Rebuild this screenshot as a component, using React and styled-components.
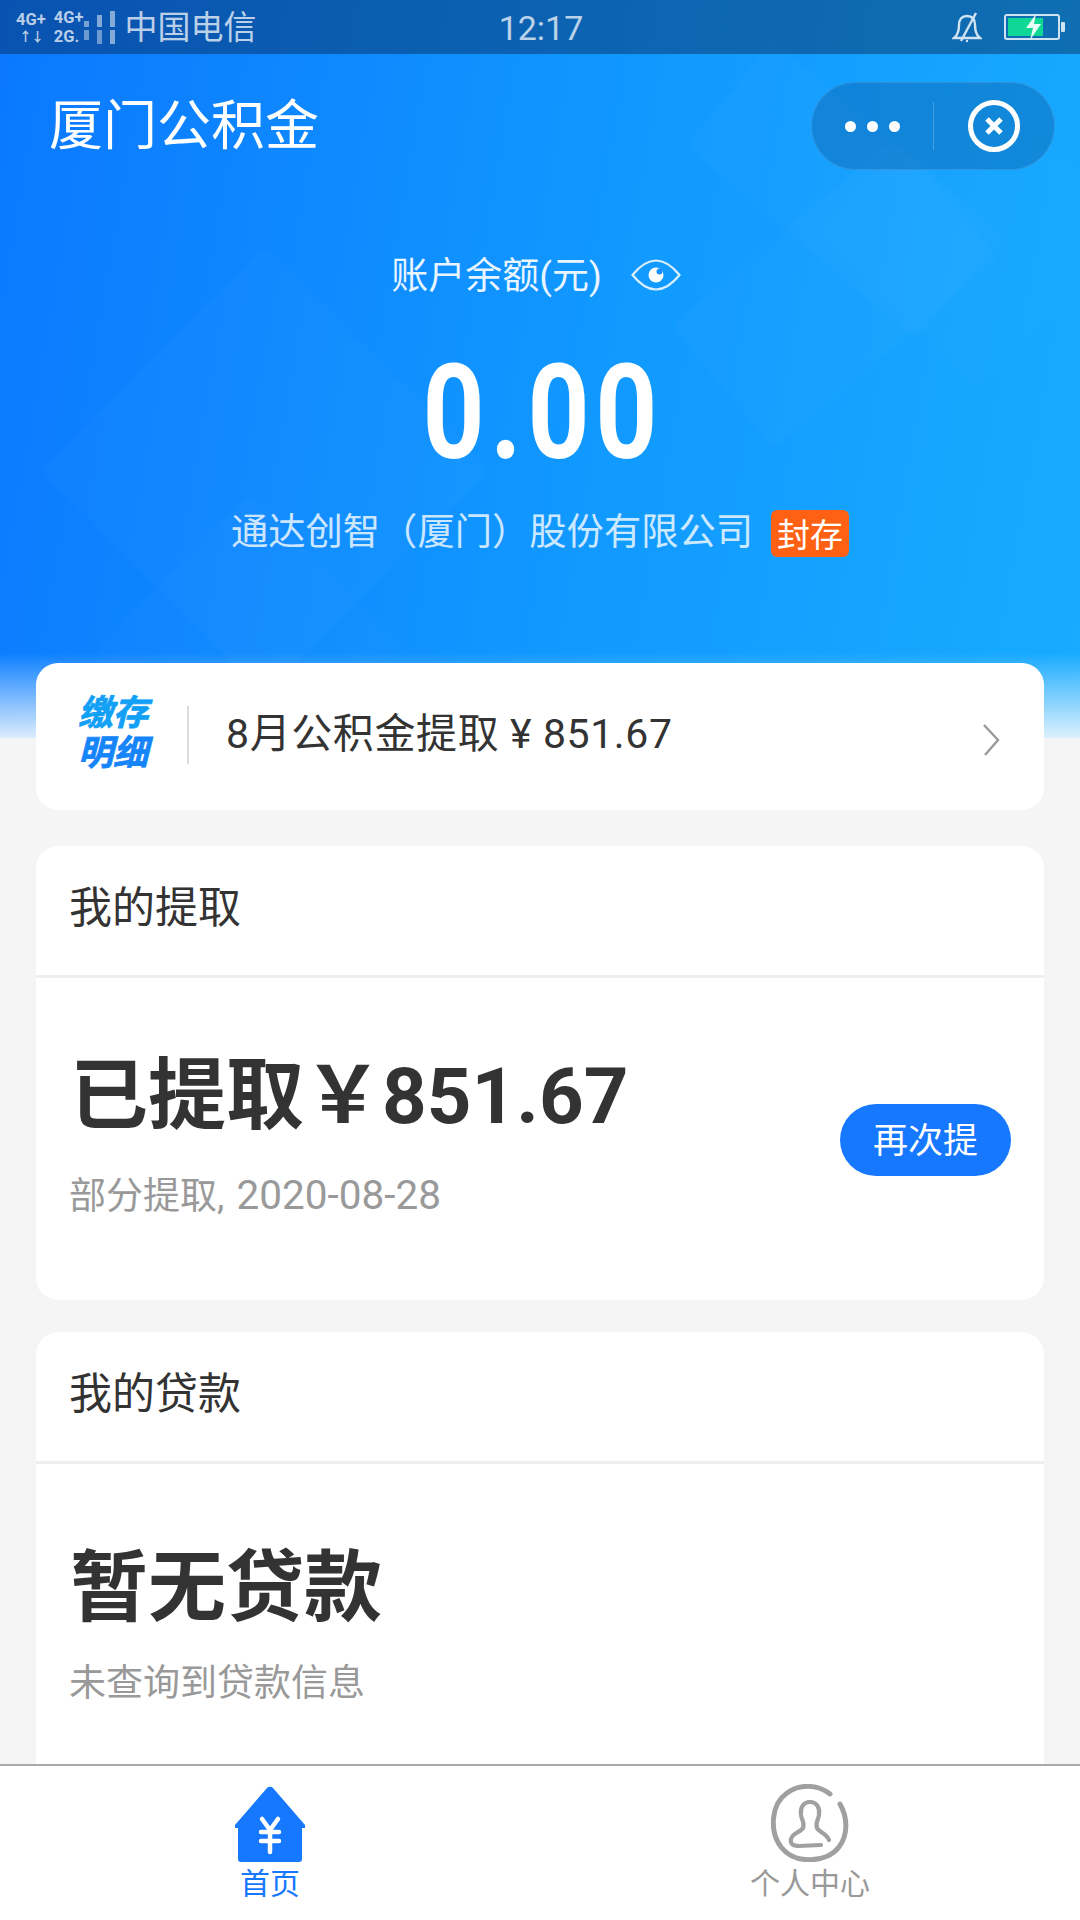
import React from "react"
import styled, { createGlobalStyle } from "styled-components"

const GlobalStyle = createGlobalStyle`
  html, body {
    margin: 0;
    padding: 0;
    background: #f5f5f5;
    font-family: Roboto, "Noto Sans CJK SC", sans-serif;
  }
  * {
    box-sizing: border-box;
  }
`

const Page = styled.div`
  width: 1080px;
  height: 1920px;
  display: flex;
  flex-direction: column;
  overflow: hidden;
`

const Scroll = styled.div`
  flex: 1;
  min-height: 0;
  overflow: hidden;
`

const Hero = styled.div`
  position: relative;
  height: 738px;
  overflow: hidden;
  color: #fff;
  background: linear-gradient(100deg, #0b78ff 0%, #1199ff 55%, #18abff 100%);

  &::after {
    content: "";
    position: absolute;
    left: 0;
    right: 0;
    bottom: 0;
    height: 85px;
    background: linear-gradient(
      to bottom,
      rgba(255, 255, 255, 0),
      rgba(238, 246, 252, 0.92)
    );
  }
`

const Diamond = styled.div`
  position: absolute;
  left: ${(props) => props.x}px;
  top: ${(props) => props.y}px;
  width: ${(props) => props.w}px;
  height: ${(props) => props.h}px;
  transform: rotate(${(props) => props.angle}deg);
  border-radius: 10px;
  background: rgba(255, 255, 255, ${(props) => props.alpha});
`

const StatusBar = styled.div`
  position: relative;
  z-index: 1;
  height: 54px;
  display: flex;
  align-items: center;
  padding: 0 14px 0 16px;
  background: rgba(8, 30, 70, 0.42);
  color: rgba(255, 255, 255, 0.72);
`

const StatusLeft = styled.div`
  flex: 1;
  display: flex;
  align-items: center;
`

const NetworkCol = styled.div`
  display: flex;
  flex-direction: column;
  font-size: 16.5px;
  line-height: 19.5px;
  font-weight: 700;
  margin-right: ${(props) => props.gap || 0}px;
`

const Arrows = styled.span`
  font-size: 13px;
  line-height: 15px;
  letter-spacing: -1px;
  padding-left: 3px;
`

const Signal = styled.div`
  display: grid;
  grid-template-columns: repeat(3, 5px);
  gap: 3px 8px;
  margin-right: 9px;
`

const SignalBar = styled.span`
  width: 5px;
  height: ${(props) => props.h}px;
  align-self: ${(props) => (props.end ? "end" : "start")};
  background: rgba(255, 255, 255, ${(props) => props.o});
`

const Carrier = styled.span`
  font-size: 33px;
  line-height: 54px;
  margin-top: 2px;
`

const Clock = styled.span`
  flex: 1;
  text-align: center;
  font-size: 34px;
  line-height: 54px;
  margin-top: 2px;
`

const StatusRight = styled.div`
  flex: 1;
  display: flex;
  justify-content: flex-end;
  align-items: center;
  gap: 22px;
`

const NavBar = styled.div`
  position: relative;
  z-index: 1;
  height: 142px;
  display: flex;
  align-items: center;
  justify-content: space-between;
  padding: 0 25px 0 49px;
`

const NavTitle = styled.h1`
  margin: 4px 0 0;
  font-size: 54px;
  line-height: 70px;
  font-weight: 400;
`

const Capsule = styled.div`
  width: 244px;
  height: 88px;
  margin-top: 2px;
  display: flex;
  align-items: center;
  border-radius: 44px;
  background: rgba(10, 80, 150, 0.35);
  border: 1px solid rgba(255, 255, 255, 0.12);
`

const Dots = styled.div`
  width: 121px;
  display: flex;
  justify-content: center;
  gap: 11px;
`

const Dot = styled.span`
  width: 11px;
  height: 11px;
  border-radius: 50%;
  background: #fff;
`

const CapsuleLine = styled.div`
  width: 1px;
  height: 48px;
  background: rgba(255, 255, 255, 0.2);
`

const CloseWrap = styled.div`
  flex: 1;
  display: flex;
  justify-content: center;
`

const BalanceRow = styled.div`
  position: relative;
  z-index: 1;
  height: 60px;
  margin-top: 49px;
  display: flex;
  justify-content: center;
  align-items: center;
  gap: 29px;
  padding-right: 8px;
  font-size: 37px;
  color: rgba(255, 255, 255, 0.92);
`

const BalanceLabel = styled.span`
  margin-top: -5px;
`

const Amount = styled.div`
  position: relative;
  z-index: 1;
  margin-top: 36px;
  height: 138px;
  display: flex;
  justify-content: center;
  padding-left: 6px;
  font-size: 132px;
  line-height: 138px;
  font-weight: 700;
  letter-spacing: 7px;
`

const AmountValue = styled.span`
  display: inline-block;
  transform: translateY(3px) scaleX(0.82);
`

const CompanyRow = styled.div`
  position: relative;
  z-index: 1;
  margin-top: 30px;
  height: 48px;
  display: flex;
  justify-content: center;
  align-items: center;
  gap: 18px;
  font-size: 37.3px;
  color: rgba(255, 255, 255, 0.8);
`

const CompanyName = styled.span`
  margin-top: -9px;
`

const Badge = styled.span`
  width: 78px;
  height: 47px;
  display: flex;
  align-items: center;
  justify-content: center;
  border-radius: 6px;
  background: #ff6114;
  color: #fff;
  font-size: 33px;
  white-space: nowrap;
`

const Content = styled.div`
  position: relative;
  z-index: 2;
  margin-top: -75px;
  padding: 0 36px;
  display: flex;
  flex-direction: column;
`

const DetailCard = styled.div`
  height: 147px;
  margin-bottom: 36px;
  display: flex;
  align-items: center;
  padding: 0 44px 0 41px;
  border-radius: 22px;
  background: #fff;
`

const Logo = styled.div`
  width: 72px;
  font-size: 35px;
  line-height: 40px;
  font-weight: 700;
  font-style: italic;
  text-align: center;
  white-space: nowrap;
  margin-top: -6px;
`

const LogoRow = styled.div`
  color: ${(props) => props.tint};
  -webkit-text-stroke: 0.8px ${(props) => props.tint};
`

const LogoLine = styled.div`
  width: 2px;
  height: 58px;
  margin: -4px 37px 0 38px;
  background: #dcdcdc;
`

const DetailText = styled.div`
  flex: 1;
  font-size: 41px;
  line-height: 50px;
  color: #333;
  margin-top: -5px;
  letter-spacing: 0.6px;
`

const ChevronWrap = styled.div`
  display: flex;
  margin-top: 6px;
`

const Card = styled.div`
  margin-bottom: 32px;
  border-radius: 22px;
  background: #fff;
  height: ${(props) => props.h}px;
  flex-shrink: 0;
`

const CardHead = styled.div`
  height: 132px;
  display: flex;
  align-items: center;
  padding: 0 0 14px 33px;
  border-bottom: 3px solid #eeeeee;
  font-size: 43px;
  color: #333;
`

const CardBody = styled.div`
  display: flex;
  align-items: flex-start;
  justify-content: space-between;
  padding: ${(props) => (props.loose ? 80 : 74)}px 33px 0 34px;
`

const BigText = styled.div`
  font-size: 78px;
  line-height: 90px;
  font-weight: 700;
  color: #333;
  white-space: nowrap;
`

const SubText = styled.div`
  margin: ${(props) => (props.loose ? 25 : 28)}px 0 0 -1px;
  font-size: 37px;
  line-height: 50px;
  color: #999;
`

const SubDate = styled.span`
  font-size: 40.5px;
  margin-left: 3px;
`

const AgainButton = styled.button`
  width: 171px;
  height: 72px;
  margin-top: 52px;
  border: 0;
  padding: 0 0 6px;
  border-radius: 36px;
  background: #1677ff;
  color: #fff;
  font-family: inherit;
  font-size: 35px;
`

const TabBar = styled.div`
  height: 156px;
  flex-shrink: 0;
  display: grid;
  grid-template-columns: 1fr 1fr;
  position: relative;
  z-index: 3;
  background: #fff;
  border-top: 2px solid #aaaaaa;
`

const TabItem = styled.div`
  display: flex;
  flex-direction: column;
  align-items: center;
  padding-top: 18px;
  color: ${(props) => (props.active ? "#1677ff" : "#999")};
`

const TabIcon = styled.div`
  height: 78px;
  display: flex;
  align-items: flex-end;
`

const TabLabel = styled.span`
  font-size: 30px;
  line-height: 40px;
  margin-top: 2px;
`

const BellOff = () => (
  <svg width="30" height="32" viewBox="0 0 30 32" fill="none" stroke="#cfe3f2" strokeWidth="2.4">
    <path d="M2 27 C6 24 7 20 7 14 C7 8 10 5 15 5 C20 5 23 8 23 14 C23 20 24 24 28 27 Z" />
    <path d="M9 30 L24 2" />
    <circle cx="15" cy="30" r="1.2" fill="#cfe3f2" stroke="none" />
  </svg>
)

const Battery = () => (
  <svg width="62" height="28" viewBox="0 0 62 28" fill="none">
    <rect x="1" y="2" width="54" height="24" rx="2" stroke="#cfe3f2" strokeWidth="2" />
    <rect x="4" y="5" width="35" height="18" fill="#0fd896" />
    <path d="M32 1 L22 15 H29 L26 27 L37 11 H30 Z" fill="#e8fff6" />
    <rect x="57" y="9" width="4" height="10" rx="1" fill="#cfe3f2" />
  </svg>
)

const CloseIcon = () => (
  <svg width="54" height="54" viewBox="0 0 54 54" fill="none" stroke="#fff">
    <circle cx="27" cy="27" r="23.5" strokeWidth="5" />
    <path d="M20 20 L34 34 M34 20 L20 34" strokeWidth="5" />
  </svg>
)

const EyeIcon = () => (
  <svg width="50" height="32" viewBox="0 0 50 32" fill="none">
    <path d="M1.5 16 C10 5.5 17 1.5 25 1.5 C33 1.5 40 5.5 48.5 16 C40 26.5 33 30.5 25 30.5 C17 30.5 10 26.5 1.5 16 Z" stroke="#fff" strokeOpacity="0.85" strokeWidth="2.2" />
    <circle cx="25" cy="16" r="7.5" fill="#fff" />
    <circle cx="28.5" cy="12.5" r="3" fill="#1a8fff" />
  </svg>
)

const Chevron = () => (
  <svg width="18" height="34" viewBox="0 0 18 34" fill="none" stroke="#999" strokeWidth="2.4">
    <path d="M2 2 L16 17 L3 32" />
  </svg>
)

const HomeIcon = () => (
  <svg width="72" height="76" viewBox="0 0 72 76" fill="none">
    <path d="M33 2 a4 4 0 0 1 6 0 L71 39 v3 h-3 v31 a3 3 0 0 1 -3 3 H7 a3 3 0 0 1 -3 -3 V42 H1 v-3 Z" fill="#1677ff" />
    <path d="M28 33 L36 44 L44 33 M27 46 H45 M27 55 H45 M36 44 V66" stroke="#fff" strokeWidth="4.5" strokeLinecap="round" />
  </svg>
)

const PersonIcon = () => (
  <svg width="78" height="78" viewBox="0 0 78 78" fill="none" stroke="#a0a0a0" strokeLinecap="round">
    <path d="M69 20 C77 34 77 51 68 63 C56 79 24 81 10 63 C-2 47 0 20 16 9 C28 0 46 0 59 10" strokeWidth="5" />
    <path d="M39 18 C32 18 29 24 30 31 C31 37 34 39 32 44 C30 48 21 49 20 55 C19 60 22 62 28 62 L50 61" strokeWidth="4.2" />
    <path d="M39 18 C46 18 49 24 48 31 C47 37 44 39 46 44 C48 48 56 50 58 56" strokeWidth="4.2" />
  </svg>
)

const App = () => (
  <Page>
    <GlobalStyle />
    <Scroll>
      <Hero>
        <Diamond x={694} y={122} w={302} h={137} angle={40} alpha={0.02} />
        <Diamond x={688} y={212} w={295} h={160} angle={-40} alpha={0.02} />
        <Diamond x={864} y={117} w={226} h={226} angle={45} alpha={0.01} />
        <Diamond x={106} y={311} w={318} h={318} angle={45} alpha={0.018} />
        <Diamond x={140} y={540} w={220} h={220} angle={45} alpha={0.015} />
        <StatusBar>
          <StatusLeft>
            <NetworkCol gap={8}>
              <span>4G+</span>
              <Arrows>↑↓</Arrows>
            </NetworkCol>
            <NetworkCol gap={1}>
              <span>4G+</span>
              <span>2G.</span>
            </NetworkCol>
            <Signal>
              <SignalBar h={6} o={0.45} end />
              <SignalBar h={12} o={0.5} end />
              <SignalBar h={16} o={0.5} end />
              <SignalBar h={10} o={0.4} />
              <SignalBar h={14} o={0.4} />
              <SignalBar h={14} o={0.5} />
            </Signal>
            <Carrier>中国电信</Carrier>
          </StatusLeft>
          <Clock>12:17</Clock>
          <StatusRight>
            <BellOff />
            <Battery />
          </StatusRight>
        </StatusBar>
        <NavBar>
          <NavTitle>厦门公积金</NavTitle>
          <Capsule>
            <Dots>
              <Dot />
              <Dot />
              <Dot />
            </Dots>
            <CapsuleLine />
            <CloseWrap>
              <CloseIcon />
            </CloseWrap>
          </Capsule>
        </NavBar>
        <BalanceRow>
          <BalanceLabel>账户余额(元)</BalanceLabel>
          <EyeIcon />
        </BalanceRow>
        <Amount>
          <AmountValue>0.00</AmountValue>
        </Amount>
        <CompanyRow>
          <CompanyName>通达创智（厦门）股份有限公司</CompanyName>
          <Badge>封存</Badge>
        </CompanyRow>
      </Hero>
      <Content>
        <DetailCard>
          <Logo>
            <LogoRow tint="#12a0f6">缴存</LogoRow>
            <LogoRow tint="#1785fa">明细</LogoRow>
          </Logo>
          <LogoLine />
          <DetailText>8月公积金提取 ¥ 851.67</DetailText>
          <ChevronWrap>
            <Chevron />
          </ChevronWrap>
        </DetailCard>
        <Card h={454}>
          <CardHead>我的提取</CardHead>
          <CardBody>
            <div>
              <BigText>已提取￥851.67</BigText>
              <SubText>
                部分提取, <SubDate>2020-08-28</SubDate>
              </SubText>
            </div>
            <AgainButton>再次提</AgainButton>
          </CardBody>
        </Card>
        <Card h={454}>
          <CardHead>我的贷款</CardHead>
          <CardBody loose>
            <div>
              <BigText>暂无贷款</BigText>
              <SubText loose>未查询到贷款信息</SubText>
            </div>
          </CardBody>
        </Card>
      </Content>
    </Scroll>
    <TabBar>
      <TabItem active>
        <TabIcon>
          <HomeIcon />
        </TabIcon>
        <TabLabel>首页</TabLabel>
      </TabItem>
      <TabItem>
        <TabIcon>
          <PersonIcon />
        </TabIcon>
        <TabLabel>个人中心</TabLabel>
      </TabItem>
    </TabBar>
  </Page>
)

export default App
